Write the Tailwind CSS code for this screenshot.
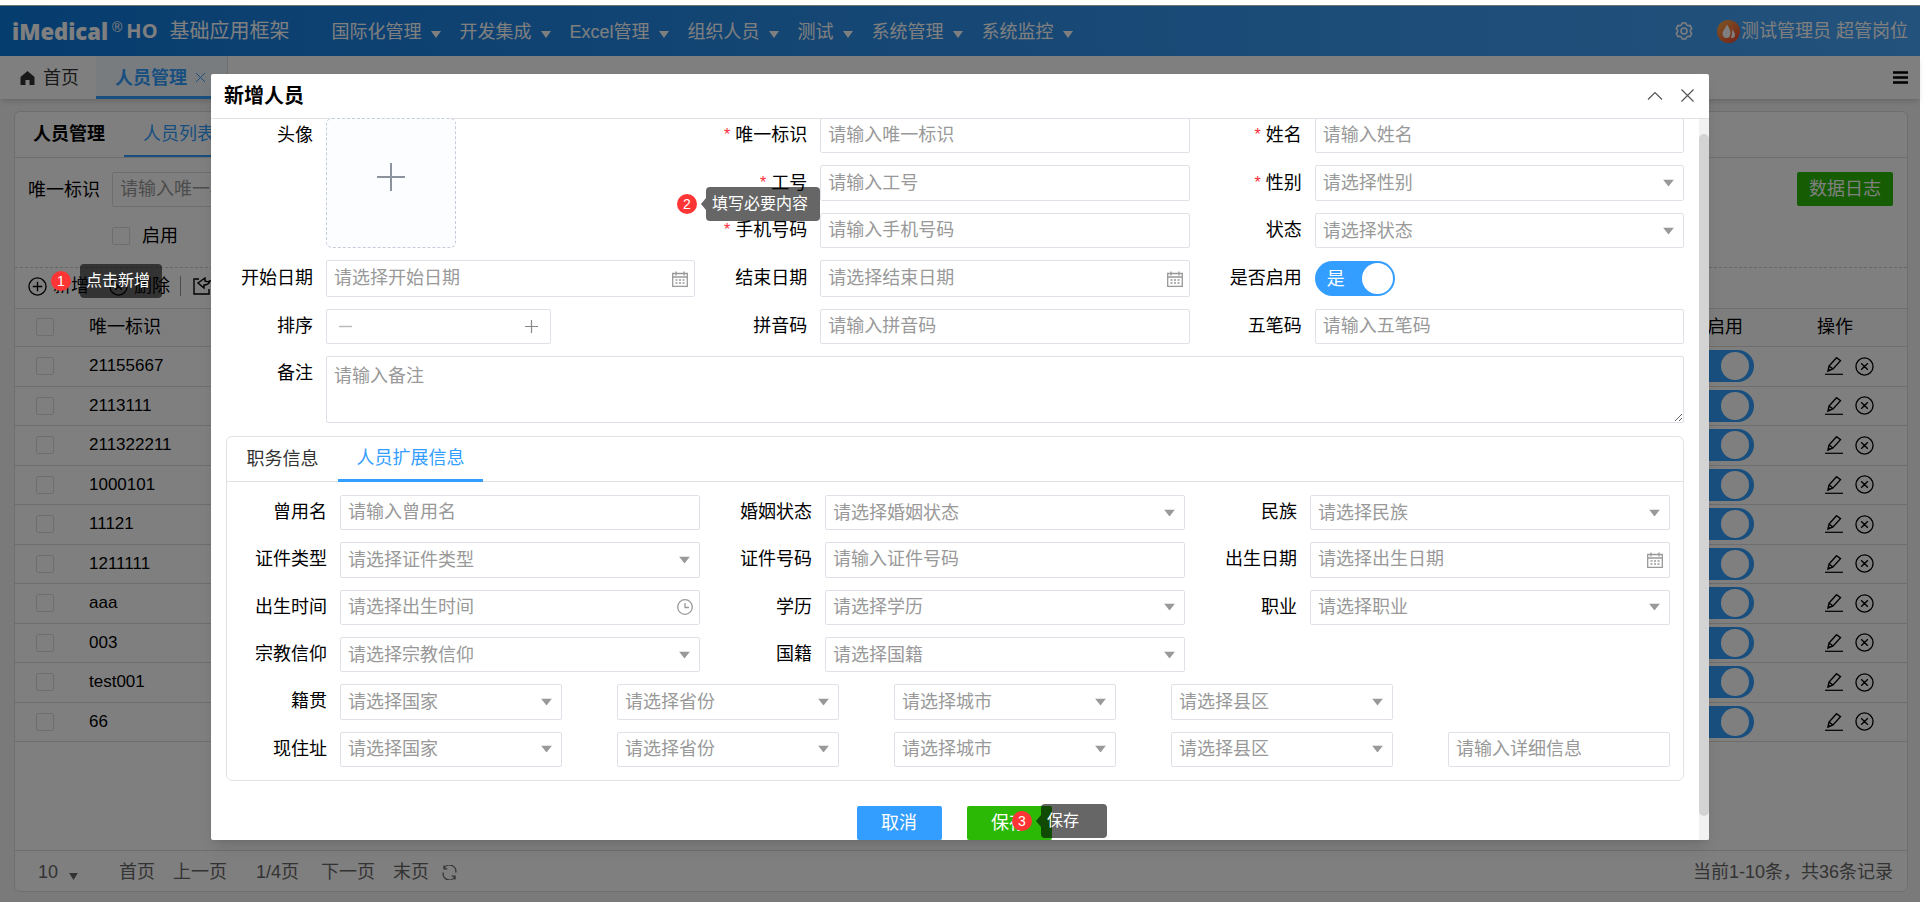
<!DOCTYPE html>
<html lang="zh-CN">
<head>
<meta charset="utf-8">
<title>人员管理</title>
<script src="https://cdn.jsdelivr.net/npm/@tailwindcss/browser@4"></script>
</head>
<body class="bg-white font-['Liberation_Sans','Noto_Sans_CJK_SC',sans-serif] text-[18px] leading-6 text-black">
<svg class="hidden">
  <symbol id="down" viewBox="0 0 10 8"><path d="M0 0h10L5 8z" fill="currentColor"/></symbol>
  <symbol id="cal" viewBox="0 0 16 16"><path d="M.7 2.500h14.600v12.800H.7zM.7 6h14.600M4 .5v4M12 .5v4M3.500 9h2M7 9h2M10.500 9h2M3.500 12h2M7 12h2M10.500 12h2" fill="none" stroke="currentColor" stroke-width="1.300"/></symbol>
  <symbol id="clock" viewBox="0 0 16 16"><path d="M8 .7a7.300 7.300 0 1 0 0 14.600A7.300 7.300 0 1 0 8 .7M8 4v4.500h4" fill="none" stroke="currentColor" stroke-width="1.300"/></symbol>
  <symbol id="del" viewBox="0 0 20 20"><path d="M10 1a9 9 0 1 0 0 18A9 9 0 1 0 10 1M6.500 6.500l7 7M13.500 6.500l-7 7" fill="none" stroke="currentColor" stroke-width="1.400"/></symbol>
  <symbol id="add" viewBox="0 0 20 20"><path d="M10 1a9 9 0 1 0 0 18A9 9 0 1 0 10 1M10 5v10M5 10h10" fill="none" stroke="currentColor" stroke-width="1.400"/></symbol>
  <symbol id="edit" viewBox="0 0 18 18"><path d="M0 17.300h18" stroke="currentColor" stroke-width="1.200"/><path d="M3 14l1-5 7.500-8.300 4 3L8 12zM4 9l4 3M3 14l2-1.500" fill="none" stroke="currentColor" stroke-width="1.400"/></symbol>
</svg>

<div class="relative flex h-screen flex-col pt-[5px] pr-[6px] pb-1">
  <div class="relative flex min-h-0 flex-1 flex-col bg-[#f5f5f5]">
    <header class="flex h-[51px] shrink-0 items-center border-t border-[#d8ecd8] bg-linear-to-r from-[#0a7add] via-[#2e90ea] to-[#46a4f8] pr-3 pl-3 text-white">
      <div class="flex items-center">
        <span class="font-['Open_Sans'] text-[22px] font-extrabold">iMedical</span>
        <span class="mb-2 ml-1 text-[14px]">®</span>
        <span class="ml-1 font-['Open_Sans'] text-[20px] font-bold">HO</span>
        <span class="ml-3 text-[20px]">基础应用框架</span>
      </div>
      <nav id="menu" class="ml-[42px] flex gap-[19px] pt-0.5"></nav>
      <button aria-label="设置" class="ml-auto"><svg class="size-[18px]" viewBox="0 0 18 18" fill="none" stroke="currentColor" stroke-width="1.500"><path d="M6.500 2.800L7.300 1h3.400l.8 1.800 1.500.9 2-.3 1.700 3L15.500 8v2l1.200 1.600-1.700 3-2-.3-1.500.9-.8 1.800H7.300l-.8-1.800-1.500-.9-2 .3-1.700-3L2.500 10V8L1.300 6.400l1.700-3 2 .3z"/><circle cx="9" cy="9" r="3"/></svg></button>
      <svg class="ml-6 size-[23px]" viewBox="0 0 23 23"><defs><linearGradient id="fl" x1="0" y1="0" x2="1" y2="1"><stop offset="0" stop-color="#ffb04a"/><stop offset="1" stop-color="#e8402c"/></linearGradient></defs><circle cx="11.500" cy="11.500" r="11.500" fill="url(#fl)"/><path d="M10 4.500c2 3 3.500 5.500 3.500 8.500s-1.500 5-4 5-4-2-4-4.500C5.500 11 8.500 8 10 4.500zM15 9c1.500 2 3 4 3 6s-1.500 3.500-4.200 3c1.400-3 1.500-6 1.200-9z" fill="#fff"/></svg>
      <a href="#" class="ml-px">测试管理员 超管岗位</a>
    </header>

    <div class="z-0 flex h-[43px] shrink-0 items-stretch bg-white pr-3 shadow-md">
      <a href="#" class="flex w-24 items-center gap-2 pl-5 text-[#333]"><svg class="h-[14px] w-[15px]" viewBox="0 0 15 14"><path d="M7.500 0L14.500 6v8H9.500V9h-4v5H.5V6z" fill="currentColor"/></svg>首页</a>
      <div class="flex w-[132px] items-center gap-2 border-r border-b-[3px] border-r-[#ddd] border-b-[#339eff] bg-[#f0f8ff] pt-[3px] pl-[19px] font-bold text-[#339eff]"><a href="#">人员管理</a><button aria-label="关闭标签"><svg class="size-[11px]" viewBox="0 0 11 11"><path d="M1 1l9 9M10 1l-9 9" stroke="currentColor"/></svg></button></div>
      <button aria-label="菜单" class="ml-auto"><svg class="h-[13px] w-[15px]" viewBox="0 0 15 13"><path d="M0 1.500h15M0 6.500h15M0 11.500h15" stroke="#000" stroke-width="2.600"/></svg></button>
    </div>

    <main class="mt-3 mr-3 mb-[10px] ml-[14px] flex min-h-0 flex-1 flex-col rounded-md border border-[#ddd] bg-white">
      <div class="flex h-[46px] shrink-0 items-stretch border-b border-[#ddd]">
        <h1 class="flex w-[109px] items-center pb-0.5 pl-[18px] font-bold">人员管理</h1>
        <a href="#" class="flex items-center border-b-2 border-[#339eff] px-[19px] text-[#339eff]">人员列表</a>
      </div>
      <form class="flex h-[110px] shrink-0 justify-between border-b border-dashed border-[#ccc] pt-[14px] pr-[14px] pl-[13px]">
        <div>
          <div class="flex items-center gap-3"><label for="q">唯一标识</label><input id="q" placeholder="请输入唯一标识" class="h-[35px] w-[225px] rounded-xs border border-[#ddd] px-[7px] placeholder:text-[#999]"></div>
          <div class="mt-[17px] ml-[84px] flex items-center gap-3"><input id="en" type="checkbox" class="size-[18px] appearance-none rounded-xs border border-[#ddd]"><label for="en">启用</label></div>
        </div>
        <button type="button" class="h-[34px] rounded-xs bg-[#2bb906] px-3 text-white">数据日志</button>
      </form>
      <div class="flex h-[41px] shrink-0 items-center border-b border-[#ddd] pb-1 pl-[13px]">
        <button class="flex items-center gap-[6px]"><svg class="size-[19px]"><use href="#add"/></svg>新增</button>
        <button class="ml-5 flex items-center gap-[6px]"><svg class="size-[19px]"><use href="#del"/></svg>删除</button>
        <span class="ml-[10px] h-5 border-l border-[#999]"></span>
        <button class="ml-3 flex items-center gap-[6px]"><svg class="size-[18px]" viewBox="0 0 18 18" fill="none" stroke="currentColor" stroke-width="1.400"><path d="M6 2H1v15h15v-5M12 1L5 6l6 5V8c3 0 5-1 6-4-2 1-3 1-5 0z"/></svg>导入</button>
      </div>
      <table class="w-full table-fixed text-left text-[17px]">
        <thead><tr class="h-[37px] border-b border-[#ddd] bg-[#fcfcfc] text-[18px]">
          <th class="w-[74px] pl-[21px]"><input type="checkbox" aria-label="全选" class="block size-[18px] appearance-none rounded-xs border border-[#ddd]"></th>
          <th class="font-normal">唯一标识</th>
          <th class="w-[146px] font-normal">是否启用</th>
          <th class="w-[90px] font-normal">操作</th>
        </tr></thead>
        <tbody id="rows"></tbody>
      </table>
      <footer class="mt-auto flex h-[41px] shrink-0 items-center border-t border-[#ddd] pt-0.5 pr-[14px] pl-[23px] text-[#666]">
        <button class="flex items-center gap-[11px]">10<svg class="mt-2 h-[7px] w-[9px]"><use href="#down"/></svg></button>
        <a href="#" class="ml-[41px]">首页</a><a href="#" class="ml-[18px]">上一页</a><span class="ml-[29px]">1/4页</span><a href="#" class="ml-[22px]">下一页</a><a href="#" class="ml-[18px]">末页</a>
        <button aria-label="刷新" class="ml-[13px]"><svg class="size-[15px]" viewBox="0 0 15 15" fill="none" stroke="currentColor" stroke-width="1.300"><path d="M2 3.500A6.300 6.300 0 0 1 13.800 7.500M13 11.500A6.300 6.300 0 0 1 1.200 7.500M2 .5v3.300h3.300M13 14.500v-3.300H9.700"/></svg></button>
        <span class="ml-auto">当前1-10条，共36条记录</span>
      </footer>
    </main>
    <div class="absolute inset-0 bg-black/50"></div>
  </div>

  <section role="dialog" aria-label="新增人员" class="absolute top-[74px] right-[217px] bottom-[66px] left-[211px] flex flex-col overflow-hidden rounded-xs bg-white shadow-lg">
    <header class="flex h-[45px] shrink-0 items-center border-b border-[#e2e2e6] pr-[15px] pb-px pl-[13px]">
      <h2 class="text-[20px] font-bold">新增人员</h2>
      <button aria-label="折叠" class="ml-auto"><svg class="h-[9px] w-4" viewBox="0 0 16 9"><path d="M1 8.500l7-7 7 7" fill="none" stroke="#555" stroke-width="1.200"/></svg></button>
      <button aria-label="关闭" class="ml-[18px]"><svg class="size-[13px]" viewBox="0 0 13 13"><path d="M.5.5l12 12M12.500.5l-12 12" stroke="#555" stroke-width="1.200"/></svg></button>
    </header>
    <div class="flex min-h-0 flex-1">
      <form class="-mt-px min-w-0 flex-1 pr-[15px]">
        <div id="base" class="grid grid-cols-[115px_1fr_125px_1fr_125px_1fr] grid-rows-[35px_36px_35px] gap-y-3"></div>
        <div class="mt-[13px] ml-[15px] rounded-md border border-[#e2e2e6]">
          <div class="flex h-[45px] border-b border-[#e2e2e6]">
            <button type="button" class="w-[111px] pb-px text-[#333]">职务信息</button>
            <button type="button" class="-mb-px w-[145px] border-b-[3px] border-[#339eff] text-[#339eff]">人员扩展信息</button>
          </div>
          <div class="flex h-[298px] flex-col gap-3 py-[13px] pr-[13px]" id="ext"></div>
        </div>
        <div class="mt-[25px] flex justify-center gap-[25px] pl-[13px]">
          <button type="button" class="h-[34px] w-[85px] rounded-xs bg-[#339eff] text-white">取消</button>
          <button type="button" class="h-[34px] w-[85px] rounded-xs bg-[#2bb906] text-white">保存</button>
        </div>
      </form>
      <div class="w-[10px] shrink-0 bg-[#f1f1f1] pt-[15px] pb-6"><div class="h-full rounded-full bg-[#d3d3d3]"></div></div>
    </div>
  </section>

  <div class="absolute top-[264px] left-[51px] flex items-center gap-[9px] text-[16px] text-white">
    <span class="flex size-5 items-center justify-center rounded-full bg-[#ff3535] text-[14px]">1</span>
    <span class="flex h-[34px] w-[82px] items-center rounded-sm bg-black/60 pl-[6px]">点击新增</span>
  </div>
  <div class="absolute top-[187px] left-[677px] flex items-center text-[16px] text-white">
    <span class="flex size-5 items-center justify-center rounded-full bg-[#ff3535] text-[14px]">2</span>
    <svg class="ml-1 h-3 w-[5px]" viewBox="0 0 5 12"><path d="M5 0v12L0 6z" fill="#000" fill-opacity=".6"/></svg>
    <span class="flex h-[34px] w-[114px] items-center rounded-sm bg-black/60 pl-[6px]">填写必要内容</span>
  </div>
  <div class="absolute top-[804px] left-[1012px] flex items-center text-[16px] text-white">
    <span class="flex size-5 items-center justify-center rounded-full bg-[#ff3535] text-[14px]">3</span>
    <svg class="ml-1 h-3 w-[5px]" viewBox="0 0 5 12"><path d="M5 0v12L0 6z" fill="#000" fill-opacity=".6"/></svg>
    <span class="flex h-[34px] w-[66px] items-center rounded-sm bg-black/60 pl-[6px]">保存</span>
  </div>
</div>

<script>
const $ = id => document.getElementById(id);
$('menu').innerHTML = ['国际化管理','开发集成','Excel管理','组织人员','测试','系统管理','系统监控'].map(t =>
  `<a href="#" class="flex items-center gap-[9px]">${t}<svg class="mt-1 h-[7px] w-[10px]" viewBox="0 0 10 7"><path d="M0 0h10L5 7z" fill="currentColor"/></svg></a>`).join('');

$('rows').innerHTML = ['21155667','2113111','211322211','1000101','11121','1211111','aaa','003','test001','66'].map(t =>
  `<tr class="border-b border-[#ddd] odd:h-10 even:h-[39px]">
    <td class="pl-[21px]"><input type="checkbox" aria-label="选择 ${t}" class="block size-[18px] appearance-none rounded-xs border border-[#ddd]"></td>
    <td>${t}</td>
    <td><button role="switch" aria-checked="true" aria-label="是否启用" class="flex h-8 w-[83px] items-center justify-end rounded-full bg-[#339eff] pr-[5px]"><span class="size-7 rounded-full bg-white"></span></button></td>
    <td><div class="flex gap-3 pl-2"><button aria-label="编辑"><svg class="size-[18px]"><use href="#edit"/></svg></button><button aria-label="删除"><svg class="size-[19px]"><use href="#del"/></svg></button></div></td>
  </tr>`).join('');

let n = 0;
function control(kind, hint, id) {
  if (kind === 'select') return `<div class="relative h-full"><select id="${id}" aria-label="${hint}" class="h-full w-full appearance-none rounded-xs border border-[#e0e0e8] bg-white px-[7px] text-[#999]"><option>${hint}</option></select><svg class="pointer-events-none absolute top-1/2 right-[10px] h-[7px] w-[11px] -translate-y-1/2 text-[#999]" viewBox="0 0 11 7"><path d="M0 0h11L5.500 7z" fill="currentColor"/></svg></div>`;
  const icon = kind === 'date' ? '#cal' : kind === 'time' ? '#clock' : '';
  return `<div class="relative h-full"><input id="${id}" aria-label="${hint}" placeholder="${hint}" class="block h-full w-full rounded-xs border border-[#e0e0e8] px-[7px] placeholder:text-[#999]">${icon ? `<svg class="pointer-events-none absolute top-1/2 right-[7px] size-4 -translate-y-1/2 text-[#999]"><use href="${icon}"/></svg>` : ''}</div>`;
}
function label(text, id, required) {
  return `<label for="${id}" class="flex items-center justify-end gap-[5px] pr-[13px] pb-px whitespace-nowrap">${required ? '<span class="text-[16px] text-red-500">*</span>' : ''}${text}</label>`;
}
function field(text, kind, required) {
  const id = 'f' + n++;
  return label(text, id, required) + control(kind, (kind === 'text' ? '请输入' : '请选择') + text, id);
}
$('base').innerHTML =
  `<span class="pt-[5px] pr-[13px] text-right">头像</span>
   <button type="button" aria-label="上传头像" class="row-span-3 flex size-[130px] items-center justify-center rounded-md border border-dashed border-[#c6ccda] bg-[#fbfdff] pb-3"><svg class="size-7" viewBox="0 0 28 28"><path d="M14 0v28M0 14h28" stroke="#8c939d" stroke-width="2"/></svg></button>` +
  field('唯一标识', 'text', true) + field('姓名', 'text', true) +
  '<span></span>' + field('工号', 'text', true) + field('性别', 'select', true) +
  '<span></span>' + field('手机号码', 'text', true) + field('状态', 'select') +
  field('开始日期', 'date') + field('结束日期', 'date') +
  `<label for="sw" class="flex items-center justify-end pr-[13px] pb-px">是否启用</label>
   <button id="sw" type="button" role="switch" aria-checked="true" class="my-px flex h-[35px] w-20 items-center justify-between rounded-full bg-[#339eff] pr-[2px] pl-3 text-white">是<span class="size-[31px] rounded-full bg-white"></span></button>` +
  label('排序', 'sort') +
  `<div class="flex h-[35px] w-[225px] items-center rounded-xs border border-[#e0e0e8] px-3"><button type="button" aria-label="减" class="shrink-0"><svg class="size-[13px]" viewBox="0 0 13 13"><path d="M0 6.500h13" stroke="#bbb" stroke-width="1.500"/></svg></button><input id="sort" class="min-w-0 flex-1"><button type="button" aria-label="加" class="shrink-0"><svg class="size-[13px]" viewBox="0 0 13 13"><path d="M0 6.500h13M6.500 0v13" stroke="#888" stroke-width="1.200"/></svg></button></div>` +
  field('拼音码', 'text') + field('五笔码', 'text') +
  `<label for="memo" class="pt-[5px] pr-[13px] text-right">备注</label><textarea id="memo" placeholder="请输入备注" class="col-span-5 h-[67px] resize-y rounded-xs border border-[#e0e0e8] px-[7px] pt-[7px] placeholder:text-[#999]"></textarea>`;

const line = cells => `<div class="grid min-h-0 flex-1 grid-cols-[113px_1fr_125px_1fr_125px_1fr]">${cells}</div>`;
const place = (name, extra) => `<div class="grid min-h-0 flex-1 grid-cols-[113px_1fr]">${label(name, name)}<div class="grid grid-cols-5 gap-[55px]">${['国家','省份','城市','县区'].map((t, i) => control('select', '请选择' + t, i ? 'f' + n++ : name)).join('')}${extra}</div></div>`;
$('ext').innerHTML =
  line(field('曾用名', 'text') + field('婚姻状态', 'select') + field('民族', 'select')) +
  line(field('证件类型', 'select') + field('证件号码', 'text') + field('出生日期', 'date')) +
  line(field('出生时间', 'time') + field('学历', 'select') + field('职业', 'select')) +
  line(field('宗教信仰', 'select') + field('国籍', 'select')) +
  place('籍贯', '') + place('现住址', control('text', '请输入详细信息', 'detail'));
</script>
</body>
</html>
